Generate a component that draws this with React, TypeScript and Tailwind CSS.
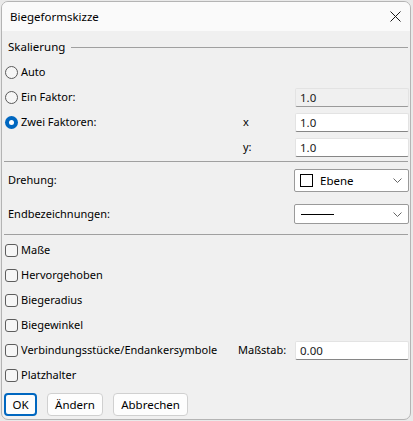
import React from 'react'

const font = { fontFamily: '"Segoe UI", "Noto Sans", "Open Sans", sans-serif' }

function Radio({ checked }: { checked?: boolean }) {
  if (checked) {
    return (
      <span className="flex h-[13px] w-[13px] items-center justify-center rounded-full bg-[#0067c0]">
        <span className="h-[5px] w-[5px] rounded-full bg-white" />
      </span>
    )
  }
  return <span className="h-[13px] w-[13px] rounded-full border border-[#5a5a5a] bg-[#f6f6f6]" />
}

function Check() {
  return <span className="h-[13px] w-[13px] rounded-[3px] border border-[#5d5d5d] bg-[#f6f6f6]" />
}

function Field({ value, disabled }: { value: string; disabled?: boolean }) {
  return (
    <div
      className={
        'flex h-[19px] w-[114px] items-center rounded-[2px] border border-[#e3e3e3] pl-[4px] text-[11.5px] text-[#1a1a1a] ' +
        (disabled ? 'bg-[#f0f0f0] border-b-[#9a9a9a]' : 'bg-white border-b-[#868686]')
      }
    >
      {value}
    </div>
  )
}

function Chevron() {
  return (
    <svg width="9" height="5" viewBox="0 0 9 5" className="text-[#666]">
      <path d="M0.5 0.5 L4.5 4.5 L8.5 0.5" fill="none" stroke="currentColor" strokeWidth="1" />
    </svg>
  )
}

export default function App() {
  return (
    <div className="h-[421px] w-[413px] bg-[#e9e9e9] p-[1px]" style={font}>
      <div className="flex h-[419px] w-[410px] flex-col overflow-hidden rounded-[7px] border border-[#b4b4b4] bg-[#f0f0f0] text-[11px] text-black">
        {/* title bar */}
        <div className="flex h-[29px] shrink-0 items-center justify-between bg-[#fafafa] pl-[8px] pr-[8px]">
          <span className="text-[11.5px]">Biegeformskizze</span>
          <svg width="11" height="11" viewBox="0 0 11 11" className="mr-[1px]">
            <path d="M0.5 0.5 L10.5 10.5 M10.5 0.5 L0.5 10.5" stroke="#1a1a1a" strokeWidth="1" />
          </svg>
        </div>

        <div className="flex flex-col px-[1px]">
          {/* group label */}
          <div className="mt-[8px] flex h-[16px] items-center">
            <span className="ml-[5px] text-[11.5px]">Skalierung</span>
            <span className="ml-[6px] mr-[1px] h-px flex-1 bg-[#a0a0a0]" />
          </div>

          <div className="mt-[5px] flex flex-col">
            <div className="flex h-[25px] items-center gap-[3px] pl-[2px]">
              <Radio />
              <span>Auto</span>
            </div>
            <div className="flex h-[25px] items-center pl-[2px]">
              <Radio />
              <span className="ml-[3px] flex-1">Ein Faktor:</span>
              <Field value="1.0" disabled />
            </div>
            <div className="flex h-[25px] items-center pl-[2px]">
              <Radio checked />
              <span className="ml-[3px] w-[222px]">Zwei Faktoren:</span>
              <span className="flex-1">x</span>
              <Field value="1.0" />
            </div>
            <div className="flex h-[25px] items-center pl-[2px]">
              <span className="ml-[238px] flex-1">y:</span>
              <Field value="1.0" />
            </div>
          </div>

          <div className="mt-[1px] h-px bg-[#a0a0a0] mx-[1px]" />

          <div className="mt-[7px] flex h-[23px] items-center">
            <span className="ml-[5px] flex-1">Drehung:</span>
            <div className="flex h-[23px] w-[115px] items-center rounded-[2px] border border-[#9a9a9a] bg-white pl-[5px] pr-[6px]">
              <span className="h-[13px] w-[13px] border border-black" />
              <span className="ml-[7px] flex-1 text-[11.5px]">Ebene</span>
              <Chevron />
            </div>
          </div>

          <div className="mt-[12px] flex h-[20px] items-center">
            <span className="ml-[5px] flex-1">Endbezeichnungen:</span>
            <div className="flex h-[20px] w-[115px] items-center rounded-[2px] border border-[#9a9a9a] bg-white pl-[6px] pr-[6px]">
              <span className="h-px w-[33px] bg-black" />
              <span className="flex-1" />
              <Chevron />
            </div>
          </div>

          <div className="mt-[10px] h-px bg-[#a0a0a0] mx-[1px]" />

          <div className="mt-[3px] flex flex-col">
            {['Maße', 'Hervorgehoben', 'Biegeradius', 'Biegewinkel'].map(label => (
              <div key={label} className="flex h-[25px] items-center gap-[3px] pl-[2px]">
                <Check />
                <span>{label}</span>
              </div>
            ))}
            <div className="flex h-[25px] items-center pl-[2px]">
              <Check />
              <span className="ml-[3px] w-[217px]">Verbindungsstücke/Endankersymbole</span>
              <span className="flex-1">Maßstab:</span>
              <Field value="0.00" />
            </div>
            <div className="flex h-[25px] items-center gap-[3px] pl-[2px]">
              <Check />
              <span>Platzhalter</span>
            </div>
          </div>

          <div className="mt-[5px] flex gap-[10px] pl-[1px] text-[11.5px]">
            <button className="flex h-[23px] w-[33px] items-center justify-center rounded-[4px] border-2 border-[#0067c0] bg-[#fdfdfd]">
              OK
            </button>
            <button className="flex h-[23px] w-[56px] items-center justify-center rounded-[4px] border border-[#d0d0d0] bg-[#fdfdfd]">
              Ändern
            </button>
            <button className="flex h-[23px] w-[75px] items-center justify-center rounded-[4px] border border-[#d0d0d0] bg-[#fdfdfd]">
              Abbrechen
            </button>
          </div>
        </div>
      </div>
    </div>
  )
}
